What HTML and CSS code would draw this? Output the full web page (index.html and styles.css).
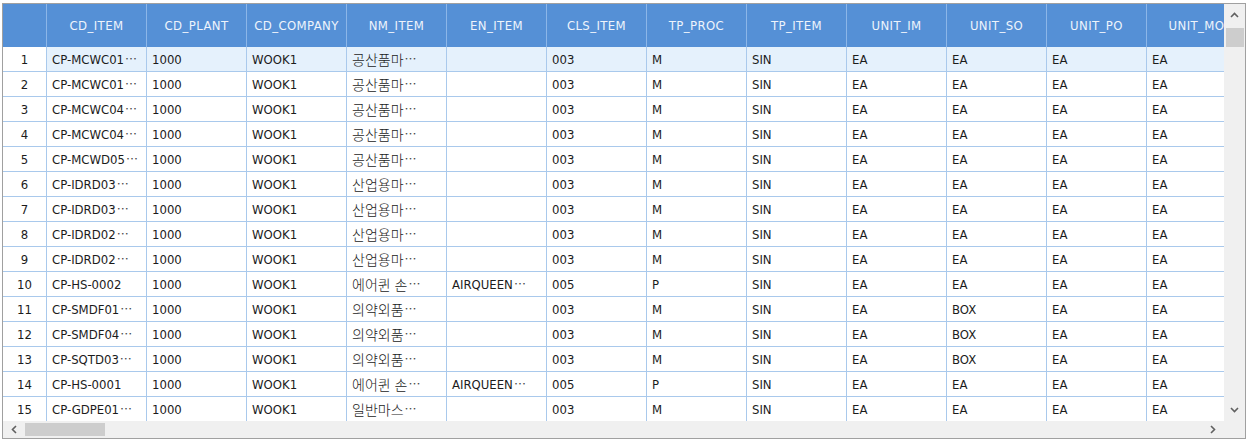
FILE: index.html
```html
<!DOCTYPE html>
<html lang="ko">
<head>
<meta charset="utf-8">
<title>Grid</title>
<link rel="stylesheet" href="styles.css">
</head>
<body>
<div class="frame">
  <div class="main">
    <div class="grid">
      <div class="row head">
        <div class="c num"></div>
        <div class="c">CD_ITEM</div><div class="c">CD_PLANT</div><div class="c">CD_COMPANY</div><div class="c">NM_ITEM</div><div class="c">EN_ITEM</div><div class="c">CLS_ITEM</div><div class="c">TP_PROC</div><div class="c">TP_ITEM</div><div class="c">UNIT_IM</div><div class="c">UNIT_SO</div><div class="c">UNIT_PO</div><div class="c">UNIT_MO</div>
      </div>
      <div class="row sel"><div class="c num">1</div><div class="c">CP-MCWC01<span class="el">…</span></div><div class="c">1000</div><div class="c">WOOK1</div><div class="c"><span class="ko">공산품마</span><span class="el">…</span></div><div class="c"></div><div class="c">003</div><div class="c">M</div><div class="c">SIN</div><div class="c">EA</div><div class="c">EA</div><div class="c">EA</div><div class="c">EA</div></div>
      <div class="row"><div class="c num">2</div><div class="c">CP-MCWC01<span class="el">…</span></div><div class="c">1000</div><div class="c">WOOK1</div><div class="c"><span class="ko">공산품마</span><span class="el">…</span></div><div class="c"></div><div class="c">003</div><div class="c">M</div><div class="c">SIN</div><div class="c">EA</div><div class="c">EA</div><div class="c">EA</div><div class="c">EA</div></div>
      <div class="row"><div class="c num">3</div><div class="c">CP-MCWC04<span class="el">…</span></div><div class="c">1000</div><div class="c">WOOK1</div><div class="c"><span class="ko">공산품마</span><span class="el">…</span></div><div class="c"></div><div class="c">003</div><div class="c">M</div><div class="c">SIN</div><div class="c">EA</div><div class="c">EA</div><div class="c">EA</div><div class="c">EA</div></div>
      <div class="row"><div class="c num">4</div><div class="c">CP-MCWC04<span class="el">…</span></div><div class="c">1000</div><div class="c">WOOK1</div><div class="c"><span class="ko">공산품마</span><span class="el">…</span></div><div class="c"></div><div class="c">003</div><div class="c">M</div><div class="c">SIN</div><div class="c">EA</div><div class="c">EA</div><div class="c">EA</div><div class="c">EA</div></div>
      <div class="row"><div class="c num">5</div><div class="c">CP-MCWD05<span class="el">…</span></div><div class="c">1000</div><div class="c">WOOK1</div><div class="c"><span class="ko">공산품마</span><span class="el">…</span></div><div class="c"></div><div class="c">003</div><div class="c">M</div><div class="c">SIN</div><div class="c">EA</div><div class="c">EA</div><div class="c">EA</div><div class="c">EA</div></div>
      <div class="row"><div class="c num">6</div><div class="c">CP-IDRD03<span class="el">…</span></div><div class="c">1000</div><div class="c">WOOK1</div><div class="c"><span class="ko">산업용마</span><span class="el">…</span></div><div class="c"></div><div class="c">003</div><div class="c">M</div><div class="c">SIN</div><div class="c">EA</div><div class="c">EA</div><div class="c">EA</div><div class="c">EA</div></div>
      <div class="row"><div class="c num">7</div><div class="c">CP-IDRD03<span class="el">…</span></div><div class="c">1000</div><div class="c">WOOK1</div><div class="c"><span class="ko">산업용마</span><span class="el">…</span></div><div class="c"></div><div class="c">003</div><div class="c">M</div><div class="c">SIN</div><div class="c">EA</div><div class="c">EA</div><div class="c">EA</div><div class="c">EA</div></div>
      <div class="row"><div class="c num">8</div><div class="c">CP-IDRD02<span class="el">…</span></div><div class="c">1000</div><div class="c">WOOK1</div><div class="c"><span class="ko">산업용마</span><span class="el">…</span></div><div class="c"></div><div class="c">003</div><div class="c">M</div><div class="c">SIN</div><div class="c">EA</div><div class="c">EA</div><div class="c">EA</div><div class="c">EA</div></div>
      <div class="row"><div class="c num">9</div><div class="c">CP-IDRD02<span class="el">…</span></div><div class="c">1000</div><div class="c">WOOK1</div><div class="c"><span class="ko">산업용마</span><span class="el">…</span></div><div class="c"></div><div class="c">003</div><div class="c">M</div><div class="c">SIN</div><div class="c">EA</div><div class="c">EA</div><div class="c">EA</div><div class="c">EA</div></div>
      <div class="row"><div class="c num">10</div><div class="c">CP-HS-0002</div><div class="c">1000</div><div class="c">WOOK1</div><div class="c"><span class="ko">에어퀸 손</span><span class="el">…</span></div><div class="c">AIRQUEEN<span class="el">…</span></div><div class="c">005</div><div class="c">P</div><div class="c">SIN</div><div class="c">EA</div><div class="c">EA</div><div class="c">EA</div><div class="c">EA</div></div>
      <div class="row"><div class="c num">11</div><div class="c">CP-SMDF01<span class="el">…</span></div><div class="c">1000</div><div class="c">WOOK1</div><div class="c"><span class="ko">의약외품</span><span class="el">…</span></div><div class="c"></div><div class="c">003</div><div class="c">M</div><div class="c">SIN</div><div class="c">EA</div><div class="c">BOX</div><div class="c">EA</div><div class="c">EA</div></div>
      <div class="row"><div class="c num">12</div><div class="c">CP-SMDF04<span class="el">…</span></div><div class="c">1000</div><div class="c">WOOK1</div><div class="c"><span class="ko">의약외품</span><span class="el">…</span></div><div class="c"></div><div class="c">003</div><div class="c">M</div><div class="c">SIN</div><div class="c">EA</div><div class="c">BOX</div><div class="c">EA</div><div class="c">EA</div></div>
      <div class="row"><div class="c num">13</div><div class="c">CP-SQTD03<span class="el">…</span></div><div class="c">1000</div><div class="c">WOOK1</div><div class="c"><span class="ko">의약외품</span><span class="el">…</span></div><div class="c"></div><div class="c">003</div><div class="c">M</div><div class="c">SIN</div><div class="c">EA</div><div class="c">BOX</div><div class="c">EA</div><div class="c">EA</div></div>
      <div class="row"><div class="c num">14</div><div class="c">CP-HS-0001</div><div class="c">1000</div><div class="c">WOOK1</div><div class="c"><span class="ko">에어퀸 손</span><span class="el">…</span></div><div class="c">AIRQUEEN<span class="el">…</span></div><div class="c">005</div><div class="c">P</div><div class="c">SIN</div><div class="c">EA</div><div class="c">EA</div><div class="c">EA</div><div class="c">EA</div></div>
      <div class="row"><div class="c num">15</div><div class="c">CP-GDPE01<span class="el">…</span></div><div class="c">1000</div><div class="c">WOOK1</div><div class="c"><span class="ko">일반마스</span><span class="el">…</span></div><div class="c"></div><div class="c">003</div><div class="c">M</div><div class="c">SIN</div><div class="c">EA</div><div class="c">EA</div><div class="c">EA</div><div class="c">EA</div></div>
    </div>
    <div class="vscroll">
      <div class="arrow"><svg width="9" height="6" viewBox="0 0 9 6"><path d="M1 5 L4.5 1.5 L8 5" fill="none" stroke="#606060" stroke-width="1.6"/></svg></div>
      <div class="vthumb"></div>
      <div class="vtrack"></div>
      <div class="arrow"><svg width="9" height="6" viewBox="0 0 9 6"><path d="M1 1 L4.5 4.5 L8 1" fill="none" stroke="#606060" stroke-width="1.6"/></svg></div>
    </div>
  </div>
  <div class="hscroll">
    <div class="harrow"><svg width="6" height="9" viewBox="0 0 6 9"><path d="M5 1 L1.5 4.5 L5 8" fill="none" stroke="#606060" stroke-width="1.6"/></svg></div>
    <div class="hthumb"></div>
    <div class="htrack"></div>
    <div class="harrow"><svg width="6" height="9" viewBox="0 0 6 9"><path d="M1 1 L4.5 4.5 L1 8" fill="none" stroke="#606060" stroke-width="1.6"/></svg></div>
    <div class="corner"></div>
  </div>
</div>
</body>
</html>
```
FILE: styles.css
```css
* { box-sizing: border-box; }
html, body { margin: 0; padding: 0; background: #ffffff; }
body {
  font-family: "DejaVu Sans Condensed", "Noto Sans CJK KR", sans-serif;
  font-size: 13px;
  color: #1b1b1b;
}
.frame {
  margin: 3px 0 0 2px;
  width: 1244px;
  height: 436px;
  border: 1px solid #a0a0a0;
  display: flex;
  flex-direction: column;
  overflow: hidden;
}
.main {
  display: flex;
  height: 417px;
}
.grid {
  width: 1221px;
  overflow: hidden;
  flex: none;
}
.row {
  display: grid;
  grid-template-columns: 44px repeat(12, 100px);
  height: 25px;
}
.c {
  border-right: 1px solid #a9c9ec;
  border-bottom: 1px solid #a9c9ec;
  padding: 0 0 0 5px;
  display: flex;
  align-items: center;
  white-space: nowrap;
  overflow: hidden;
  line-height: 1;
}
.c.num {
  justify-content: center;
  padding: 0;
  background: #ffffff;
}
.row.sel .c { background: #e5f1fc; }
.row.sel .c.num { background: #ffffff; }
.row.head { height: 43px; }
.row.head .c {
  background: #5590d6;
  color: #eef4fc;
  justify-content: center;
  padding: 0;
  border-bottom: none;
  border-right: 1px solid #8cb6e8;
  letter-spacing: 0.4px;
}
.ko {
  font-family: "Noto Sans CJK KR", sans-serif;
  font-size: 14px;
  font-weight: 300;
}
.el {
  font-family: "Noto Sans CJK KR", sans-serif;
  font-size: 12px;
  color: #444;
  margin-left: 1px;
}
.vscroll {
  width: 21px;
  flex: none;
  background: #f0f0f0;
  display: flex;
  flex-direction: column;
  align-items: center;
}
.arrow {
  height: 22px;
  width: 100%;
  display: flex;
  align-items: center;
  justify-content: center;
  flex: none;
}
.vthumb {
  width: 18px;
  height: 19px;
  background: #cdcdcd;
  margin-top: 2px;
  flex: none;
}
.vtrack { flex: 1; }
.hscroll {
  height: 17px;
  display: flex;
  background: #f0f0f0;
  align-items: center;
}
.harrow {
  width: 22px;
  height: 100%;
  display: flex;
  align-items: center;
  justify-content: center;
  flex: none;
}
.hthumb {
  width: 80px;
  height: 13px;
  background: #cdcdcd;
  flex: none;
}
.htrack { flex: 1; }
.corner {
  width: 21px;
  height: 100%;
  background: #f0f0f0;
  flex: none;
}
```
